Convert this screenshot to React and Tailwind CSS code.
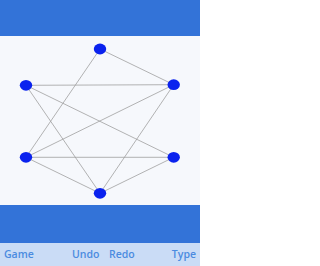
import React from "react";

const nodes = {
  T: [100, 13],
  LU: [26, 49.3],
  RU: [173.7, 48.7],
  LL: [26, 121.3],
  RL: [173.7, 121.3],
  B: [100, 157.3],
};

const edges = [
  ["T", "RU"],
  ["T", "LL"],
  ["LU", "RU"],
  ["LU", "RL"],
  ["LU", "B"],
  ["RU", "LL"],
  ["RU", "B"],
  ["LL", "RL"],
  ["LL", "B"],
  ["RL", "B"],
];

export default function App() {
  return (
    <div
      className="w-[200px] h-[266px] flex flex-col overflow-hidden"
      style={{ fontFamily: "'Open Sans', 'Noto Sans', sans-serif" }}
    >
      <div className="h-[36px] bg-[#3373d8]" />
      <div className="h-[169px] bg-[#f6f8fc]">
        <svg width="200" height="169" viewBox="0 0 200 169">
          {edges.map(([a, b], i) => (
            <line
              key={i}
              x1={nodes[a][0]}
              y1={nodes[a][1]}
              x2={nodes[b][0]}
              y2={nodes[b][1]}
              stroke="#a0a0a0"
              strokeWidth="0.8"
            />
          ))}
          {Object.entries(nodes).map(([k, [x, y]]) => (
            <ellipse key={k} cx={x} cy={y} rx="6.2" ry="5.4" fill="#0a22ee" />
          ))}
        </svg>
      </div>
      <div className="h-[38px] bg-[#3373d8]" />
      <div className="flex-1 bg-[#cadcf6] flex items-center text-[10.5px] font-semibold text-[#4b8be0] leading-none">
        <span className="ml-[4px] w-[68px]">Game</span>
        <span className="w-[37px]">Undo</span>
        <span>Redo</span>
        <span className="ml-auto mr-[4px]">Type</span>
      </div>
    </div>
  );
}
